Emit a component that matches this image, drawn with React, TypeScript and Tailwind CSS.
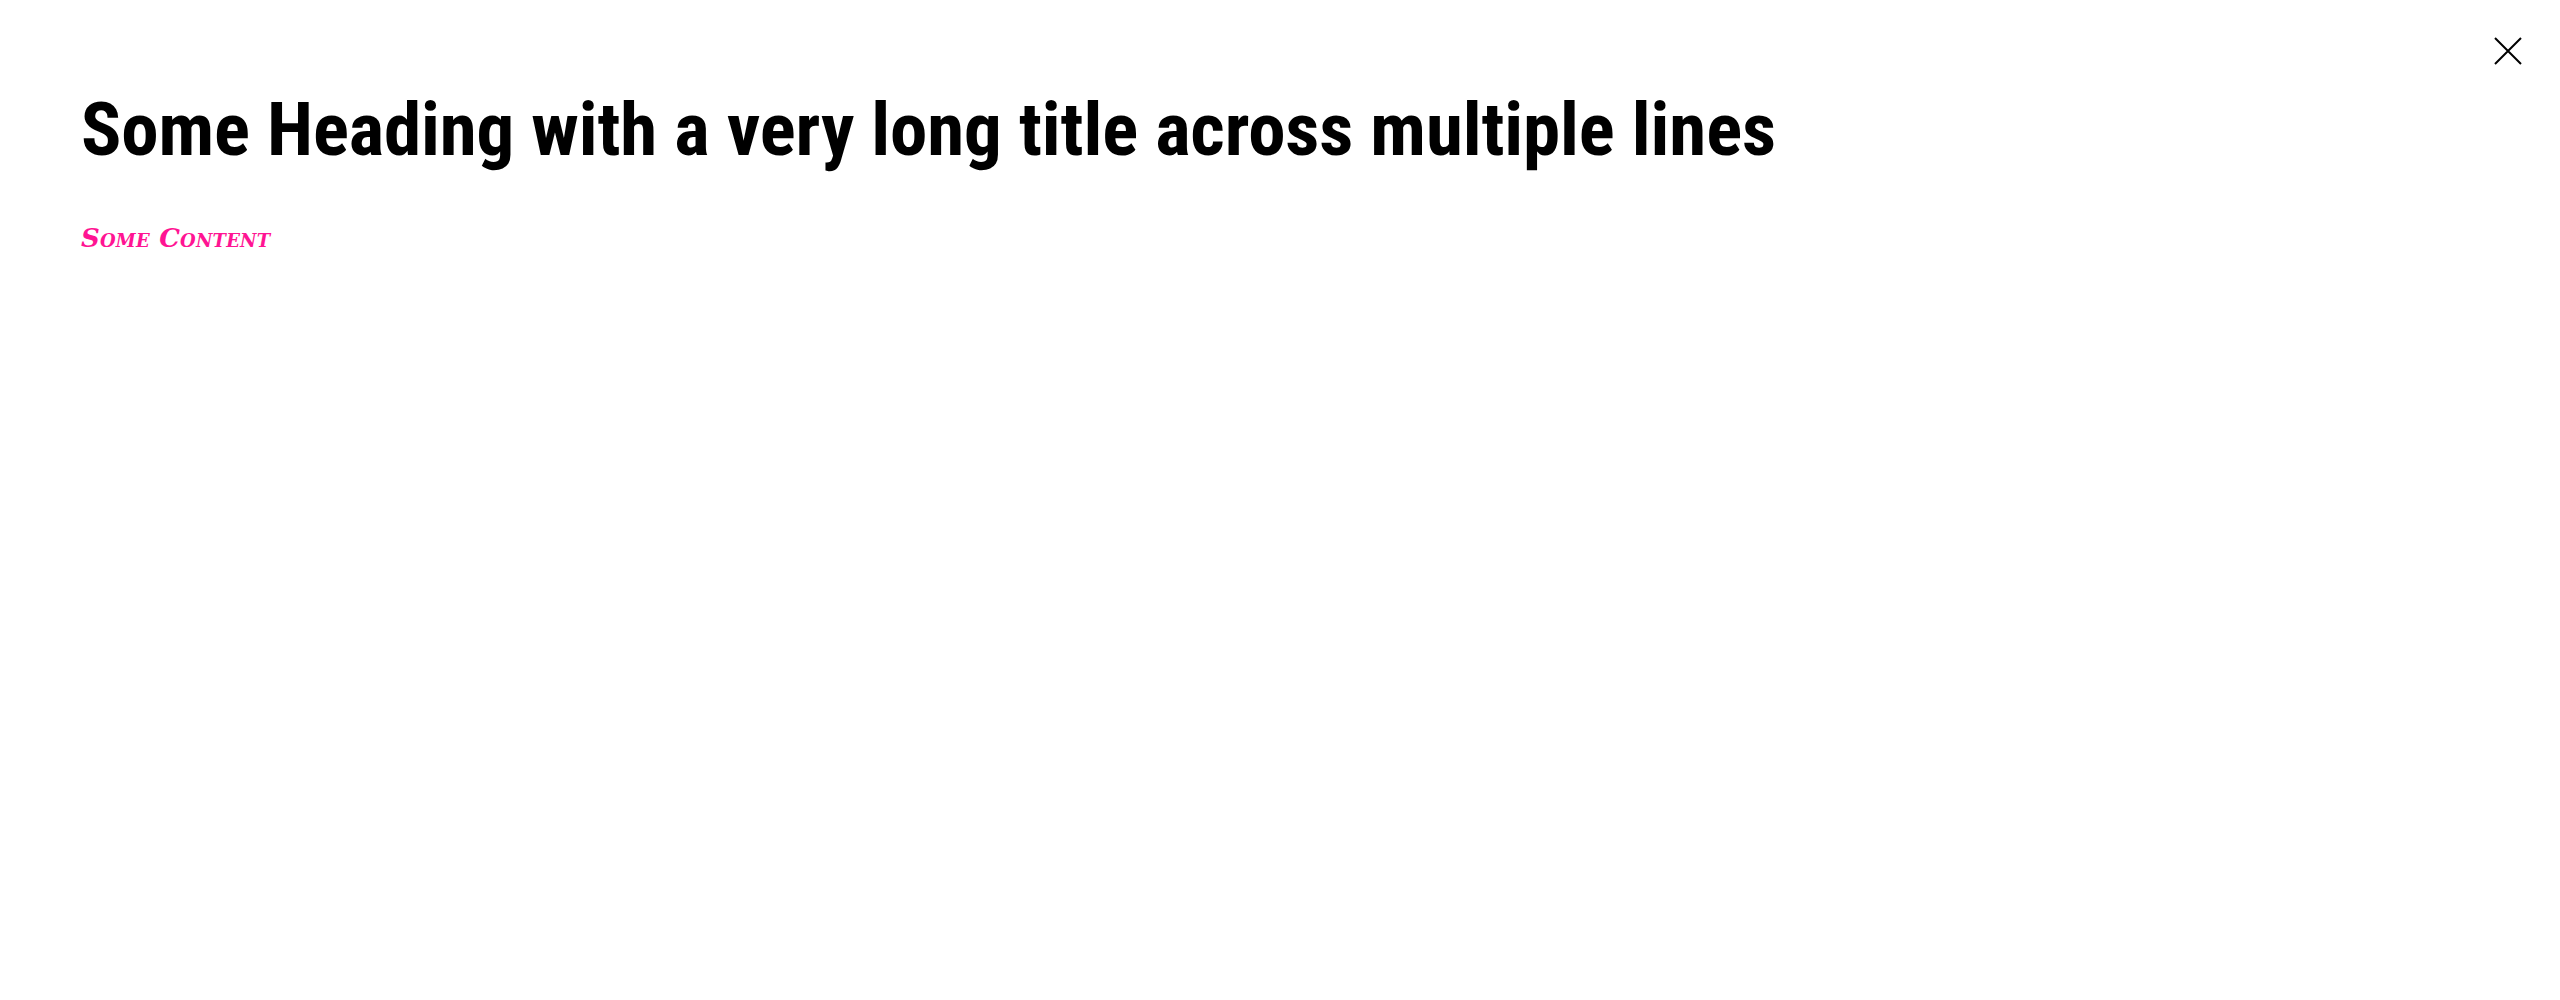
export default function App() {
  return (
    <div className="relative min-h-screen bg-white">
      <button className="absolute top-[37px] left-[2494px] w-[28px] h-[28px] text-black">
        <svg width="28" height="28" viewBox="0 0 28 28" fill="none" stroke="currentColor" strokeWidth="2">
          <path d="M1 1L27 27M27 1L1 27" />
        </svg>
      </button>

      <div className="px-[81px] pt-[87px]">
        <h1 className="text-[75px] leading-[84px] font-bold tracking-[-0.12px] text-black [font-family:'Roboto_Condensed','Liberation_Sans_Narrow','DejaVu_Sans_Condensed',sans-serif]">
          Some Heading with a very long title across multiple lines
        </h1>

        <p className="mt-[48px] text-[26px] font-bold italic tracking-[0.2px] [font-variant:small-caps] text-[#ff1493] [font-family:'DejaVu_Serif',serif]">
          Some Content
        </p>
      </div>
    </div>
  );
}
